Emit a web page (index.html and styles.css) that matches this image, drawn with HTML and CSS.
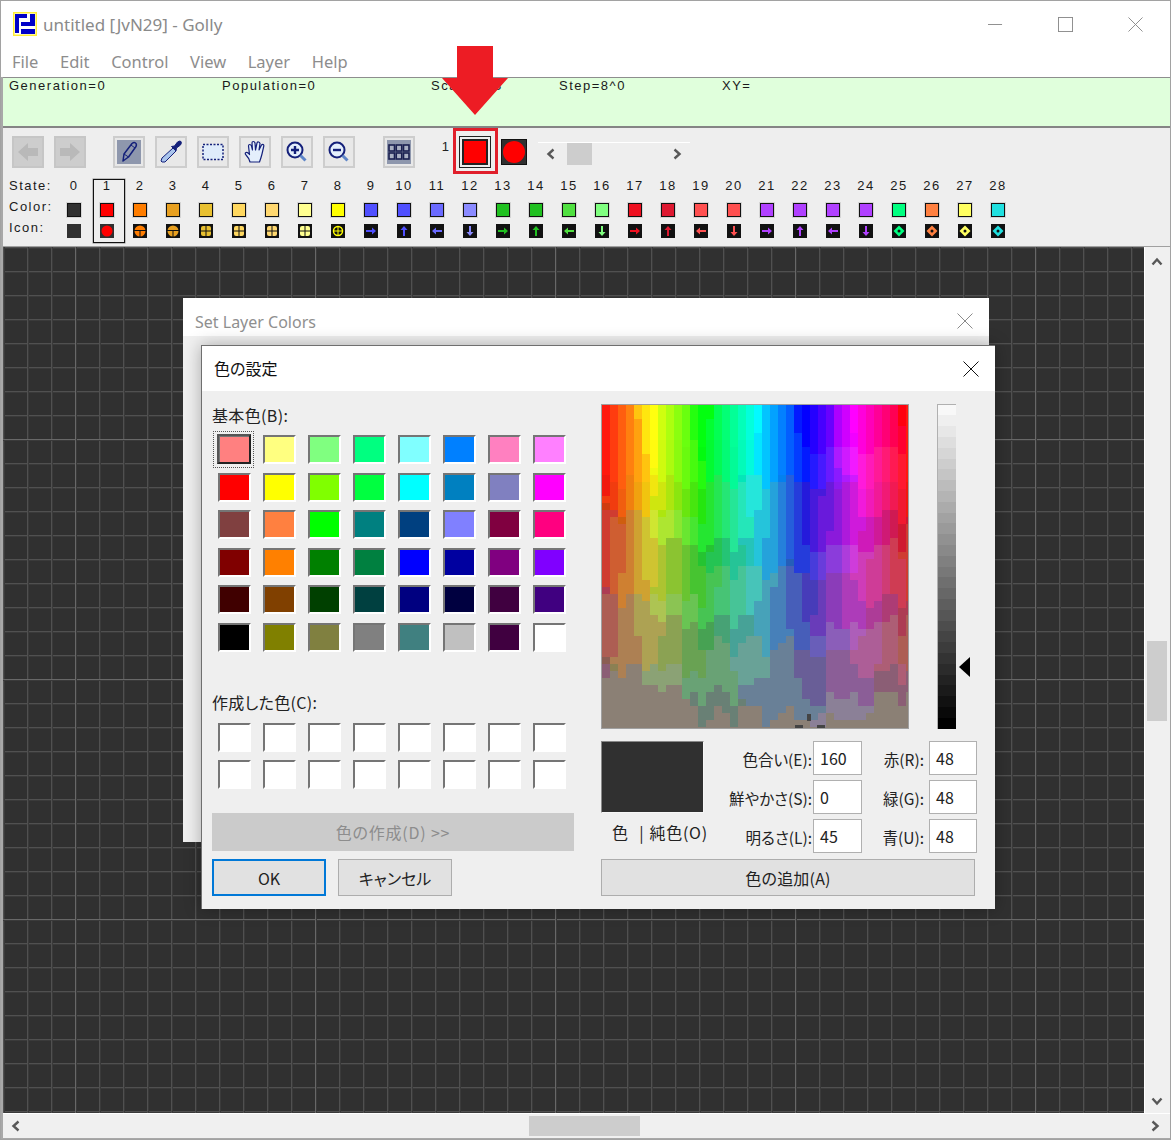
FILE: index.html
```html
<!DOCTYPE html>
<html lang="ja">
<head>
    <meta charset="UTF-8">
    <meta name="viewport" content="width=device-width, initial-scale=1.0">
    <title>untitled [JvN29] - Golly</title>
    <link rel="stylesheet" href="styles.css">
</head>
<body>
    <div class="window">
        <div class="titlebar">
            <svg class="app-icon" viewBox="0 0 24 24">
                <rect width="24" height="24" fill="#ffee33"/>
                <rect x="1.500" y="1.500" width="21" height="21" fill="#fff"/>
                <path d="M2 2h12v4H6v15H2zM17 2h5v12H8v-4h9zM8 17h14v5H8z" fill="#0000c8"/>
            </svg>
            <span class="title-text">untitled [JvN29] - Golly</span>
            <div class="win-controls">
                <svg viewBox="0 0 16 16"><path d="M0 8h15" /></svg>
                <svg viewBox="0 0 16 16"><rect x="0.5" y="0.5" width="15" height="15"/></svg>
                <svg viewBox="0 0 16 16"><path d="M0.5 0.5l15 15M15.5 0.5l-15 15"/></svg>
            </div>
        </div>

        <div class="menubar">
            <span>File</span><span>Edit</span><span>Control</span><span>View</span><span>Layer</span><span>Help</span>
        </div>

        <div class="client">
            <div class="status">
                <span>Generation=0</span>
                <span>Population=0</span>
                <span>Scale=1:8</span>
                <span>Step=8^0</span>
                <span>XY=</span>
            </div>

            <div class="toolbar">
                <div class="tools">
                    <div class="tool-group">
                        <button class="tool disabled" type="button">
                            <svg viewBox="0 0 24 24"><path d="M2 12l10-9v5h10v8H12v5z" fill="#b9b9b9"/></svg>
                        </button>
                        <button class="tool disabled" type="button">
                            <svg viewBox="0 0 24 24"><path d="M22 12l-10-9v5H2v8h10v5z" fill="#b9b9b9"/></svg>
                        </button>
                    </div>
                    <div class="tool-group group-draw">
                        <button class="tool selected" type="button">
                            <svg viewBox="0 0 24 24" class="ink">
                                <path d="M6 21l1-7L15 3.500q2-1.500 3.500-.5t.5 3.500L11.500 17z" fill="none" stroke-width="1.500"/>
                                <path d="M7 14l4.500 3M14 5l4 3" fill="none" stroke-width="1"/>
                            </svg>
                        </button>
                        <button class="tool" type="button">
                            <svg viewBox="0 0 24 24" class="ink">
                                <path d="M3 22l-1-1 1-3L14 8l3 3-11 11z" fill="#a9c4ec" stroke-width="1"/>
                                <path d="M12.500 6.500l3-.5 3-4q2.500-1.500 3.500-.5t-.5 3.500l-4 3-.5 3z" fill="#14207a" stroke-width="1"/>
                            </svg>
                        </button>
                        <button class="tool" type="button">
                            <svg viewBox="0 0 24 24" class="ink">
                                <rect x="2" y="4.500" width="20" height="15" fill="#dfecfb" stroke-width="1.500" stroke-dasharray="2 1.500"/>
                            </svg>
                        </button>
                        <button class="tool" type="button">
                            <svg viewBox="0 0 24 24" class="ink">
                                <path d="M7 22q-1-4-4-7-1.500-2 0-2.500 1.500-.5 3.500 2L5.500 6q0-1.500 1.200-1.500T8.500 6l1 4-.5-7q0-1.500 1.300-1.500T12 3l.5 7L14 3q.5-1.200 1.500-1T17 3.500L16 10l2.500-5q1-1 1.800-.5t.4 2L19 14q-1 4-2.500 8z" fill="#e4effc" stroke-width="1.200"/>
                            </svg>
                        </button>
                        <button class="tool" type="button">
                            <svg viewBox="0 0 24 24" class="ink">
                                <circle cx="10" cy="10" r="7.500" fill="#e4effc" stroke-width="2"/>
                                <path d="M10 6v8M6 10h8" fill="none" stroke-width="2.400"/>
                                <path d="M15.500 15.500l5 5" fill="none" stroke="#5f86c8" stroke-width="3"/>
                            </svg>
                        </button>
                        <button class="tool" type="button">
                            <svg viewBox="0 0 24 24" class="ink">
                                <circle cx="10" cy="10" r="7.500" fill="#e4effc" stroke-width="2"/>
                                <path d="M6 10h8" fill="none" stroke-width="2.400"/>
                                <path d="M15.500 15.500l5 5" fill="none" stroke="#5f86c8" stroke-width="3"/>
                            </svg>
                        </button>
                    </div>
                    <div class="tool-group group-view">
                        <button class="tool selected" type="button">
                            <svg viewBox="0 0 24 24" class="grid-icon">
                                <rect x="2" y="5" width="5.500" height="6"/><rect x="9.250" y="5" width="5.500" height="6"/><rect x="16.500" y="5" width="5.500" height="6"/>
                                <rect x="2" y="13" width="5.500" height="6"/><rect x="9.250" y="13" width="5.500" height="6"/><rect x="16.500" y="13" width="5.500" height="6"/>
                            </svg>
                        </button>
                    </div>
                    <span class="cur-state">1</span>
                    <div class="cur-color"><div></div></div>
                    <svg class="cur-icon" viewBox="0 0 26 26">
                        <rect width="26" height="26" fill="#303030"/>
                        <rect x="0.500" y="0.500" width="25" height="25" fill="none" stroke="#111"/>
                        <circle cx="13" cy="13" r="11" fill="#ff0000"/>
                    </svg>
                    <div class="state-scroll">
                        <svg class="chev" viewBox="0 0 12 12"><path d="M8.500 1.500L3.500 6l5 4.500"/></svg>
                        <div class="state-thumb"></div>
                        <svg class="chev chev-end" viewBox="0 0 12 12"><path d="M3.500 1.500L8.500 6l-5 4.500"/></svg>
                    </div>
                </div>
                <div class="states" id="states">
                    <span class="row-label label-state">State:</span>
                    <span class="row-label label-color">Color:</span>
                    <span class="row-label label-icon">Icon:</span>
                    <div class="state-mark"></div>
                </div>
            </div>

            <div class="viewport">
                <div class="cells"></div>
                <div class="vscroll">
                    <svg class="chev" viewBox="0 0 12 12"><path d="M1.500 8.500L6 3.500l4.500 5"/></svg>
                    <div class="vthumb"></div>
                    <svg class="chev chev-end" viewBox="0 0 12 12"><path d="M1.500 3.500L6 8.500l4.500-5"/></svg>
                </div>
            </div>

            <div class="hscroll">
                <svg class="chev" viewBox="0 0 12 12"><path d="M8.500 1.500L3.500 6l5 4.500"/></svg>
                <div class="hthumb"></div>
                <svg class="chev chev-end" viewBox="0 0 12 12"><path d="M3.500 1.500L8.500 6l-5 4.500"/></svg>
            </div>
        </div>

        <!-- 説明用の赤い矢印と枠 -->
        <div class="callout-box"></div>
        <svg class="callout-arrow" viewBox="0 0 68 70">
            <polygon points="16,0 52,0 52,32 67,32 34,69 1,32 16,32" fill="#ed1c24"/>
        </svg>

        <!-- Set Layer Colors -->
        <div class="layer-dialog">
            <div class="layer-title">
                <span>Set Layer Colors</span>
                <svg class="dlg-close" viewBox="0 0 16 16"><path d="M0.500 0.500l15 15M15.500 0.500l-15 15"/></svg>
            </div>
        </div>

        <!-- 色の設定 -->
        <div class="color-dialog">
            <div class="color-title">
                <span>色の設定</span>
                <svg class="dlg-close" viewBox="0 0 16 16"><path d="M0.500 0.500l15 15M15.500 0.500l-15 15"/></svg>
            </div>
            <div class="color-body">
                <div class="col-left">
                    <div class="group-label">基本色(B):</div>
                    <div class="swatches" id="basicColors"></div>
                    <div class="group-label label-custom">作成した色(C):</div>
                    <div class="swatches" id="customColors"></div>
                    <button class="btn btn-define" type="button">色の作成(D) &gt;&gt;</button>
                    <div class="btn-row">
                        <button class="btn btn-ok" type="button">OK</button>
                        <button class="btn btn-cancel" type="button">キャンセル</button>
                    </div>
                </div>
                <div class="col-right">
                    <div class="picker-row">
                        <div class="spectrum-box">
                            <canvas id="spectrum" width="306" height="323"></canvas>
                            <div class="cross cross-v"></div>
                            <div class="cross cross-l"></div>
                            <div class="cross cross-r"></div>
                        </div>
                        <div class="lum-box">
                            <canvas id="lum" width="18" height="324"></canvas>
                            <div class="lum-pointer"></div>
                        </div>
                    </div>
                    <div class="value-row">
                        <div class="preview-col">
                            <div class="preview"></div>
                            <div class="preview-label">色 &nbsp;| 純色(O)</div>
                        </div>
                        <div class="fields">
                            <label>色合い(E):</label><div class="field">160</div>
                            <label class="label-rgb">赤(R):</label><div class="field">48</div>
                            <label>鮮やかさ(S):</label><div class="field">0</div>
                            <label class="label-rgb">緑(G):</label><div class="field">48</div>
                            <label>明るさ(L):</label><div class="field">45</div>
                            <label class="label-rgb">青(U):</label><div class="field">48</div>
                        </div>
                    </div>
                    <button class="btn btn-add" type="button">色の追加(A)</button>
                </div>
            </div>
        </div>
    </div>

    <script src="script.js"></script>
</body>
</html>
```

FILE: styles.css
```css
* {
    box-sizing: border-box;
}

html, body {
    margin: 0;
    padding: 0;
    background-color: #fff;
}

button {
    padding: 0;
    font: inherit;
}

.window {
    position: relative;
    display: flex;
    flex-direction: column;
    width: 1171px;
    height: 1140px;
    overflow: hidden;
    border: 1px solid #a2a2a2;
    background-color: #fff;
    font-family: "Noto Sans", "Noto Sans CJK JP", sans-serif;
}

/* title and menu */
.titlebar {
    display: flex;
    align-items: center;
    flex: none;
    height: 46px;
    padding-left: 12px;
    color: #8a8a8a;
    font-size: 17px;
}

.app-icon {
    width: 24px;
    height: 24px;
    margin-right: 6px;
}

.win-controls {
    display: flex;
    align-items: center;
    margin-left: auto;
    margin-right: 27px;
    gap: 55px;
}

.win-controls svg {
    width: 15px;
    height: 15px;
    fill: none;
    stroke: #8a8a8a;
    stroke-width: 1;
}

.menubar {
    display: flex;
    flex: none;
    height: 30px;
    padding-left: 11px;
    gap: 21.6px;
    color: #8d8d8d;
    font-size: 16.5px;
    line-height: 30px;
}

.client {
    display: flex;
    flex-direction: column;
    flex: 1;
    min-height: 0;
    padding: 0 0 1px 2px;
    background-color: #a8a8a8;
}

/* status */
.status {
    display: grid;
    grid-template-columns: 213px 209px 128px 163px 1fr;
    flex: none;
    height: 51px;
    padding-left: 6px;
    border-top: 1px solid #8e8e8e;
    border-bottom: 2px solid #858585;
    background-color: #e0ffdc;
    color: #1a1a1a;
    font-family: "Liberation Sans", sans-serif;
    font-size: 13px;
    letter-spacing: 1.5px;
    line-height: 15px;
}

/* toolbar */
.toolbar {
    flex: none;
    height: 119px;
    padding-top: 8px;
    border-bottom: 1px solid #a0a0a0;
    background-color: #eeeeee;
}

.tools {
    display: flex;
    align-items: center;
    height: 32px;
    padding-left: 9px;
}

.tool-group {
    display: flex;
    gap: 10px;
}

.group-draw {
    margin-left: 27px;
}

.group-view {
    margin-left: 28px;
}

.tool {
    display: flex;
    align-items: center;
    justify-content: center;
    width: 32px;
    height: 32px;
    border: 2px solid #cdcdcd;
    background-color: #e8e8e8;
}

.tool svg {
    width: 24px;
    height: 24px;
}

.tool.disabled {
    background-color: #cdcdcd;
    border-color: #c6c6c6;
}

.tool.selected svg {
    background-color: #8e97ad;
}

.ink {
    stroke: #14207a;
    stroke-linejoin: round;
}

.grid-icon {
    fill: #a9b0c2;
    stroke: #1a2050;
    stroke-width: 1.6;
}

.cur-state {
    width: 44px;
    margin-bottom: 10px;
    padding-right: 10px;
    color: #222;
    font-family: "Liberation Sans", sans-serif;
    font-size: 13px;
    line-height: 22px;
    text-align: right;
}

.cur-color {
    width: 32px;
    height: 32px;
    padding: 2px;
    border: 1px solid #222;
    background-color: #eee;
}

.cur-color div {
    width: 100%;
    height: 100%;
    border: 2px solid #222;
    background-color: #ff0000;
}

.cur-icon {
    width: 26px;
    height: 26px;
    margin-left: 10px;
}

.state-scroll {
    display: flex;
    align-items: center;
    width: 152px;
    height: 23px;
    margin-left: 11px;
    margin-top: 3px;
    padding: 0 7px;
    border-top: 1px solid #fff;
}

.state-thumb {
    width: 25px;
    height: 22px;
    margin-left: 10px;
    background-color: #cdcdcd;
}

.chev {
    flex: none;
    width: 12px;
    height: 12px;
    fill: none;
    stroke: #585858;
    stroke-width: 2.4;
}

.chev-end {
    margin-left: auto;
}

.states {
    position: relative;
    display: grid;
    grid-template-columns: 54.5px repeat(29, 33px);
    grid-template-rows: 20px 21px 21px;
    margin-top: 8px;
    color: #1a1a1a;
    font-family: "Liberation Sans", sans-serif;
    font-size: 13px;
    letter-spacing: 1.5px;
}

.row-label {
    grid-column: 1;
    padding-left: 6px;
    line-height: 20px;
}

.label-state {
    grid-row: 1;
}

.label-color {
    grid-row: 2;
    line-height: 22px;
}

.label-icon {
    grid-row: 3;
    line-height: 22px;
}

.state-num {
    grid-row: 1;
    line-height: 20px;
    text-align: center;
}

.state-swatch {
    align-self: end;
    justify-self: center;
    width: 14px;
    height: 14px;
    border: 1px solid #111;
    box-shadow: 0 0 0 1px rgba(0, 0, 0, 0.1);
}

.state-icon {
    align-self: end;
    justify-self: center;
    width: 14px;
    height: 14px;
}

.state-mark {
    position: absolute;
    left: 90px;
    top: 3px;
    width: 32px;
    height: 64px;
    border: 1px solid #111;
    box-shadow: 0 0 0 0.5px rgba(0, 0, 0, 0.4);
    pointer-events: none;
}

/* pattern area */
.viewport {
    display: flex;
    flex: 1;
    min-height: 0;
}

.cells {
    flex: 1;
    background-color: #303030;
    background-image:
        linear-gradient(to right, #686868 1px, #3a3a3a 1px, #3a3a3a 2px, transparent 2px),
        linear-gradient(to bottom, #686868 1px, #3a3a3a 1px, #3a3a3a 2px, transparent 2px),
        linear-gradient(to right, #505050 1px, #3a3a3a 1px, #3a3a3a 2px, transparent 2px),
        linear-gradient(to bottom, #505050 1px, #3a3a3a 1px, #3a3a3a 2px, transparent 2px);
    background-size: 240px 240px, 240px 240px, 24px 24px, 24px 24px;
    background-position: 72px 0, 0 192px, 0 0, 0 0;
}

.vscroll {
    display: flex;
    flex-direction: column;
    align-items: center;
    flex: none;
    width: 26px;
    padding: 9px 2px 6px 0;
    border-left: 1px solid #fff;
    background-color: #f0f0f0;
}

.vthumb {
    flex: none;
    width: 20px;
    height: 80px;
    margin-top: 373px;
    background-color: #cdcdcd;
}

.vscroll .chev-end {
    margin-left: 0;
    margin-top: auto;
}

.hscroll {
    display: flex;
    align-items: center;
    flex: none;
    height: 25px;
    padding: 0 9px 0 7px;
    border-top: 1px solid #fff;
    background-color: #f0f0f0;
}

.hthumb {
    width: 111px;
    height: 20px;
    margin-left: 507px;
    background-color: #cdcdcd;
}

/* annotation */
.callout-box {
    position: absolute;
    left: 452px;
    top: 127px;
    width: 45px;
    height: 46px;
    border: 3px solid #e01f2b;
}

.callout-arrow {
    position: absolute;
    left: 440px;
    top: 45px;
    width: 68px;
    height: 70px;
}

/* dialogs */
.layer-dialog {
    position: absolute;
    left: 182px;
    top: 297px;
    width: 806px;
    height: 544px;
    background-color: #f0f0f0;
}

.layer-title {
    position: relative;
    height: 38px;
    padding: 13px 0 0 12px;
    background-color: #fff;
    color: #8f8f8f;
    font-size: 16px;
    line-height: 22px;
}

.dlg-close {
    position: absolute;
    right: 16px;
    top: 15px;
    width: 16px;
    height: 16px;
    fill: none;
    stroke: #8a8a8a;
    stroke-width: 1;
}

.color-dialog {
    position: absolute;
    left: 200px;
    top: 344px;
    width: 794px;
    height: 564px;
    border: 1px solid #6f6f6f;
    border-bottom: none;
    border-right: none;
    background-color: #efefef;
    box-shadow: 0 0 16px rgba(0, 0, 0, 0.3);
    font-family: "Noto Sans CJK JP", sans-serif;
    font-feature-settings: "palt";
    color: #222;
    font-size: 16px;
}

.color-title {
    position: relative;
    height: 45px;
    padding: 11px 0 0 12px;
    background-color: #fff;
    color: #111;
    line-height: 22px;
}

.color-title .dlg-close {
    right: 16px;
    stroke: #111;
}

.color-body {
    display: flex;
    padding-left: 10px;
}

.col-left {
    flex: none;
    width: 362px;
}

.group-label {
    height: 20px;
    margin-top: 14px;
    margin-bottom: 10px;
    letter-spacing: 0.35px;
    line-height: 20px;
    white-space: nowrap;
}

.label-custom {
    margin-top: 40px;
    margin-bottom: 11px;
}

.swatches {
    display: grid;
    grid-template-columns: repeat(8, 33px);
    grid-auto-rows: 29px;
    gap: 8.5px 12px;
    padding-left: 6px;
}

.swatch {
    position: relative;
    border: 2px solid;
    border-color: #757575 #fff #fff #757575;
}

.swatch.current::before {
    content: "";
    position: absolute;
    left: -3px;
    top: -3px;
    right: -2px;
    bottom: -2px;
    border: 2px solid;
    border-color: #222;
    border-left-color: #555;
    border-top-color: #555;
}

.swatch.current::after {
    content: "";
    position: absolute;
    left: -7px;
    top: -6px;
    right: -5px;
    bottom: -6px;
    border: 1px dotted #555;
}

.btn {
    display: block;
    border: 1px solid #adadad;
    background-color: #e1e1e1;
    color: #222;
    font-family: "Noto Sans CJK JP", sans-serif;
    font-feature-settings: "palt";
    font-size: 16px;
    line-height: 20px;
}

.btn-define {
    width: 362px;
    height: 38px;
    margin-top: 24px;
    border-color: #cbcbcb;
    background-color: #cbcbcb;
    color: #8d8d8d;
    letter-spacing: 0.8px;
}

.btn-row {
    display: flex;
    gap: 12px;
    margin-top: 8px;
}

.btn-ok, .btn-cancel {
    width: 114px;
    height: 37px;
}

.btn-ok {
    border: 2px solid #0078d7;
}

.col-right {
    margin-left: 27px;
    padding-top: 13px;
}

.picker-row {
    display: flex;
    gap: 28px;
    height: 325px;
}

.spectrum-box {
    position: relative;
    width: 308px;
    height: 325px;
    border: 1px solid #a0a0a0;
}

.spectrum-box canvas, .lum-box canvas {
    display: block;
}

.cross {
    position: absolute;
    background-color: #444;
}

.cross-v {
    left: 205px;
    top: 309px;
    width: 4px;
    height: 7px;
}

.cross-l {
    left: 193px;
    top: 320px;
    width: 8px;
    height: 3px;
}

.cross-r {
    left: 215px;
    top: 320px;
    width: 8px;
    height: 3px;
}

.lum-box {
    position: relative;
    width: 19px;
    height: 325px;
    border-top: 1px solid #b0b0b0;
    border-left: 1px solid #b0b0b0;
}

.lum-pointer {
    position: absolute;
    left: 21px;
    top: 252px;
    width: 0;
    height: 0;
    border-top: 10px solid transparent;
    border-bottom: 10px solid transparent;
    border-right: 11px solid #000;
}

.value-row {
    display: flex;
    margin-top: 12px;
}

.preview-col {
    flex: none;
    width: 103px;
}

.preview {
    height: 72px;
    border: 1px solid #f6f6f6;
    border-top-color: #888;
    border-left-color: #888;
    background-color: #303030;
}

.preview-label {
    margin-top: 9px;
    padding-left: 11px;
    letter-spacing: 0.7px;
    word-spacing: 1px;
    line-height: 20px;
    white-space: nowrap;
}

.fields {
    display: grid;
    grid-template-columns: 109px 49px 67px 48px;
    grid-auto-rows: 34px;
    row-gap: 5px;
}

.fields label {
    padding-right: 1px;
    font-size: 15.5px;
    line-height: 36px;
    text-align: right;
    white-space: nowrap;
}

.fields .label-rgb {
    padding-right: 5px;
}

.field {
    padding-left: 6px;
    border: 1px solid #b0b0b0;
    background-color: #fff;
    line-height: 32px;
}

.btn-add {
    width: 374px;
    height: 37px;
    margin-top: 6px;
    letter-spacing: 0.2px;
}
```

FILE: script.js
```js
const stateColors = ['#303030', '#ff0000', '#ff7d00', '#e8a020', '#e8c030', '#ffd860', '#ffd870', '#ffff90',
    '#ffff00', '#5050ff', '#5050ff', '#6a6aff', '#8a8aff', '#20c020', '#20c020', '#50e040', '#80ff80',
    '#ee1020', '#dd1830', '#ff5050', '#ff5050', '#b040ff', '#b040ff', '#b040ff', '#b040ff',
    '#00ff80', '#ff8040', '#ffff60', '#20e0e0'];

const basicColors = [
    '#ff8080', '#ffff80', '#80ff80', '#00ff80', '#80ffff', '#0080ff', '#ff80c0', '#ff80ff',
    '#ff0000', '#ffff00', '#80ff00', '#00ff40', '#00ffff', '#0080c0', '#8080c0', '#ff00ff',
    '#804040', '#ff8040', '#00ff00', '#008080', '#004080', '#8080ff', '#800040', '#ff0080',
    '#800000', '#ff8000', '#008000', '#008040', '#0000ff', '#0000a0', '#800080', '#8000ff',
    '#400000', '#804000', '#004000', '#004040', '#000080', '#000040', '#400040', '#400080',
    '#000000', '#808000', '#808040', '#808080', '#408080', '#c0c0c0', '#400040', '#ffffff'];

// arrow shapes for the wire states, 14x14
const arrows = [
    'M2 6h6V3.500L12 7l-4 3.500V8H2z',
    'M6 12V6H3.500L7 2l3.500 4H8v6z',
    'M12 6H6V3.500L2 7l4 3.500V8h6z',
    'M6 2v6H3.500L7 12l3.500-4H8V2z'];

function stateIconSvg(state, color)
{
    let shape = '';
    if (state === 1)
    {
        shape = `<circle cx="7" cy="7" r="5.500" fill="${color}"/>`;
    }
    else if (state >= 2 && state <= 3)
    {
        shape = `<circle cx="7" cy="7" r="5.500" fill="${color}"/><path d="M1 6.500h12M7 7v6" stroke="#111"/>`;
    }
    else if (state >= 4 && state <= 7)
    {
        shape = `<rect x="2" y="2" width="10" height="10" rx="2" fill="${color}"/><path d="M1 7h12M7 1v12" stroke="#111"/>`;
    }
    else if (state === 8)
    {
        shape = `<circle cx="7" cy="7" r="4.500" fill="none" stroke="${color}" stroke-width="1.500"/><path d="M2 7h10M7 2v10" stroke="${color}"/>`;
    }
    else if (state >= 9 && state <= 24)
    {
        shape = `<path d="${arrows[(state - 9) % 4]}" fill="${color}"/>`;
    }
    else if (state >= 25)
    {
        shape = `<path d="M7 1.500L12.500 7 7 12.500 1.500 7z" fill="${color}"/><circle cx="7" cy="7" r="1.500" fill="#111"/>`;
    }
    const bg = state < 2 ? '#303030' : '#111';
    return `<svg class="state-icon" viewBox="0 0 14 14" style="grid-column:${state + 2};grid-row:3">`
        + `<rect width="14" height="14" fill="${bg}"/>${shape}</svg>`;
}

// 状態の一覧を作成
function buildStates()
{
    const box = document.getElementById('states');
    let html = '';
    stateColors.forEach((color, i) =>
    {
        html += `<span class="state-num" style="grid-column:${i + 2}">${i}</span>`;
        html += `<div class="state-swatch" style="grid-column:${i + 2};grid-row:2;background-color:${color}"></div>`;
        html += stateIconSvg(i, color);
    });
    box.insertAdjacentHTML('beforeend', html);
}

function buildSwatches()
{
    const basic = document.getElementById('basicColors');
    basicColors.forEach((color, i) =>
    {
        const cell = document.createElement('div');
        cell.className = i === 0 ? 'swatch current' : 'swatch';
        cell.style.backgroundColor = color;
        basic.appendChild(cell);
    });

    const custom = document.getElementById('customColors');
    for (let i = 0; i < 16; i++)
    {
        const cell = document.createElement('div');
        cell.className = 'swatch';
        cell.style.backgroundColor = '#ffffff';
        custom.appendChild(cell);
    }
}

// hue across, saturation down, quantised like the coarse Windows bitmap
function drawSpectrum()
{
    const canvas = document.getElementById('spectrum');
    const ctx = canvas.getContext('2d');
    const cellW = 8;
    const cellH = 7;
    const step = 34;

    for (let x = 0; x < canvas.width; x += cellW)
    {
        // per column jitter so the band edges stagger instead of lining up
        const jitter = Math.sin(x * 12.9898) * 43758.5453;
        const offset = (jitter - Math.floor(jitter) - 0.5) * 0.08;

        for (let y = 0; y < canvas.height; y += cellH)
        {
            const t = (y + cellH / 2) / canvas.height;
            const hue = (x + cellW / 2) / canvas.width * 6;
            const sat = Math.max(0, 1 - Math.pow(t, 1.3) + offset * (t + 0.2));
            const rgb = [hue, hue + 4, hue + 2].map((n, channel) =>
            {
                const k = n % 6;
                const pure = 255 * Math.max(0, Math.min(1, Math.abs(k - 3) - 1));
                const value = 128 + sat * (pure - 128);
                // each channel snaps at its own threshold
                const shift = (channel - 1) * step / 3;
                const snapped = Math.round((value - 128 + shift) / step) * step + 128 - shift;
                return Math.min(255, Math.round(snapped + (value > 235 ? 20 : 0)));
            });
            ctx.fillStyle = `rgb(${rgb[0]},${rgb[1]},${rgb[2]})`;
            ctx.fillRect(x, y, cellW, cellH);
        }
    }
}

function drawLum()
{
    const canvas = document.getElementById('lum');
    const ctx = canvas.getContext('2d');
    const bands = 30;
    const bandH = canvas.height / bands;

    for (let i = 0; i < bands; i++)
    {
        const v = Math.round(248 * (1 - i / (bands - 1)));
        ctx.fillStyle = `rgb(${v},${v},${v})`;
        ctx.fillRect(0, Math.floor(i * bandH), canvas.width, Math.ceil(bandH));
    }
}

buildStates();
buildSwatches();
drawSpectrum();
drawLum();
```
